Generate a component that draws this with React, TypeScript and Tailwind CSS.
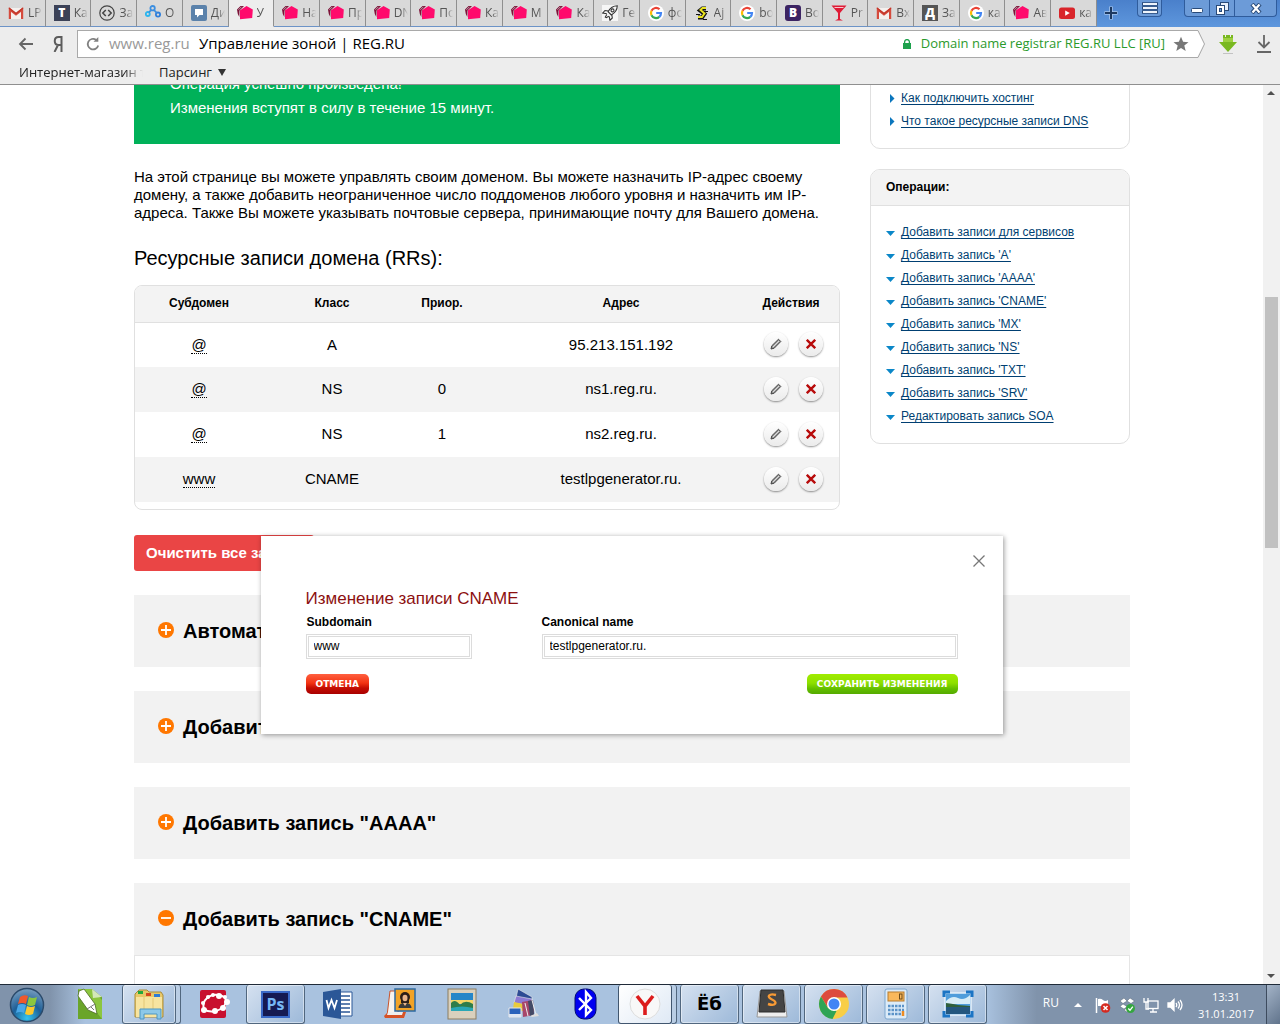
import React from "react";

const Gmail = () => (
  <svg viewBox="0 0 16 16" className="size-4 shrink-0">
    <path d="M1 3h14v11H1z" fill="#f4f0ee" />
    <path d="M1.900 14V4.600L8 9.400l6.100-4.800V14" fill="none" stroke="#d54b3d" strokeWidth="2.200" />
    <path d="M1 3l7 5.500L15 3" fill="none" stroke="#c33629" strokeWidth="1.400" />
  </svg>
);

const LetterTile = ({ letter, className = "" }: { letter: string; className?: string }) => (
  <span className={`flex size-4 shrink-0 items-center justify-center font-['Open_Sans',sans-serif] text-[12px] leading-none font-extrabold text-white ${className}`}>
    {letter}
  </span>
);

const CodeCircle = () => (
  <svg viewBox="0 0 16 16" className="size-4 shrink-0" fill="none" stroke="#444" strokeWidth="1.200">
    <circle cx="8" cy="8" r="7.200" />
    <path d="M6.800 5L3.800 8l3 3M9.200 5l3 3-3 3" strokeWidth="1.500" />
  </svg>
);

const Dots = () => (
  <svg viewBox="0 0 16 16" className="size-4 shrink-0" fill="none" strokeWidth="1.800">
    <circle cx="7.600" cy="3.200" r="2.200" stroke="#3b8ee0" />
    <circle cx="2.800" cy="9" r="2" stroke="#2cb5ee" />
    <circle cx="13" cy="9.600" r="2.100" stroke="#2f7fdb" />
    <circle cx="7.600" cy="13.600" r="1.300" stroke="#c4dff5" />
    <path d="M9 5l2.700 2.800M6 5L4 7.500" stroke="#3b8ee0" />
  </svg>
);

const Chat = () => (
  <svg viewBox="0 0 16 16" className="size-4 shrink-0">
    <rect width="16" height="16" rx="2" fill="#5b82ab" />
    <path d="M4 4h8v6H8.500l-2.500 2.500V10H4z" fill="#fff" />
  </svg>
);

const Reg = () => (
  <svg viewBox="0 0 16 16" className="size-4 shrink-0">
    <path d="M0 4.500L3.500 1H7L2.500 5.500 2.300 12 .8 9z" fill="#7d1238" />
    <path d="M1.400 4.800l3-3" stroke="#d9d9d9" strokeWidth=".7" />
    <path d="M3 5.200L9.500 1l6.300 3.500-.6 8.500L3 14.200z" fill="#ff0a6c" />
  </svg>
);

const Rocket = () => (
  <svg viewBox="0 0 16 16" className="size-4 shrink-0">
    <rect width="16" height="16" fill="#f6f6f6" />
    <g fill="none" stroke="#333" strokeWidth="1.100">
      <path d="M15.300.700c-4 0-7 2-9.300 6L9.300 10c4-2.500 6-5.300 6-9.300z" />
      <circle cx="10.500" cy="5.400" r="1.500" />
      <path d="M6.500 6L3 5.500.800 8l4 .800M9.800 9.500l.500 3.500L8 15.300l-.800-4M4.800 9.500L3.300 12l1 .700 2.500-1.500" />
    </g>
  </svg>
);

const Google = () => (
  <svg viewBox="0 0 16 16" className="size-4 shrink-0">
    <circle cx="8" cy="8" r="8" fill="#fff" />
    <g fill="none" strokeWidth="2.200">
      <path d="M11.500 4.300A5 5 0 0 0 3.500 5.800" stroke="#ea4335" />
      <path d="M3.500 5.800a5 5 0 0 0 0 4.400" stroke="#fbbc05" />
      <path d="M3.500 10.200a5 5 0 0 0 7.800 1.600" stroke="#34a853" />
      <path d="M11.300 11.800A5 5 0 0 0 13 8H8.200" stroke="#4285f4" />
    </g>
  </svg>
);

const Snake = () => (
  <svg viewBox="0 0 16 16" className="size-4 shrink-0" fill="none">
    <path d="M12 3.500H8.500L6 5.500 10.500 9 8 12.500H4" stroke="#111" strokeWidth="4" />
    <path d="M12 3H8.500L6.500 5l4 3.500L8 12H4" stroke="#e9e21f" strokeWidth="2" />
    <path d="M10 6.500h4M2 9.500h4M9 14.500h4" stroke="#111" />
  </svg>
);

const Cocktail = () => (
  <svg viewBox="0 0 16 16" className="size-4 shrink-0">
    <path d="M.500.500h15L9 8v6l3 1.500H4L7 14V8z" fill="#df1b36" />
    <path d="M3 2h10l-1 1H4z" fill="#f9c5cc" />
  </svg>
);

const YouTube = () => (
  <svg viewBox="0 0 16 16" className="size-4 shrink-0">
    <rect y="2.500" width="16" height="11.500" rx="2.500" fill="#d9252a" />
    <path d="M6.200 5.500v5.200l4.600-2.600z" fill="#fff" />
  </svg>
);

const tabs: { icon: React.ReactNode; title: string; active?: boolean }[] = [
  { icon: <Gmail />, title: "LP" },
  { icon: <LetterTile letter="T" className="bg-[#3c4257]" />, title: "Ка" },
  { icon: <CodeCircle />, title: "За" },
  { icon: <Dots />, title: "О" },
  { icon: <Chat />, title: "Ди" },
  { icon: <Reg />, title: "У", active: true },
  { icon: <Reg />, title: "На" },
  { icon: <Reg />, title: "Пр" },
  { icon: <Reg />, title: "DN" },
  { icon: <Reg />, title: "По" },
  { icon: <Reg />, title: "Ка" },
  { icon: <Reg />, title: "М" },
  { icon: <Reg />, title: "Ка" },
  { icon: <Rocket />, title: "Ге" },
  { icon: <Google />, title: "фо" },
  { icon: <Snake />, title: "Aj" },
  { icon: <Google />, title: "bo" },
  { icon: <LetterTile letter="B" className="rounded-[3px] bg-[#3c2463]" />, title: "Bo" },
  { icon: <Cocktail />, title: "Pr" },
  { icon: <Gmail />, title: "Вх" },
  { icon: <LetterTile letter="Д" className="bg-[#555]" />, title: "За" },
  { icon: <Google />, title: "ка" },
  { icon: <Reg />, title: "Ав" },
  { icon: <YouTube />, title: "ка" },
];

function TabBar() {
  return (
    <header className="flex h-[27px] shrink-0 bg-[linear-gradient(#4a80cb,#5e97dd)]">
      <div className="flex min-w-0 flex-1" role="tablist">
        {tabs.map((t, i) => (
          <button
            key={i}
            role="tab"
            aria-selected={!!t.active}
            className={`flex min-w-0 flex-1 items-center gap-1 overflow-hidden border-r border-b border-r-[#8f8f8f] pl-2 text-[12px] text-[#555] ${
              t.active ? "border-b-[#ededed] bg-[#ededed]" : "border-b-[#6c93c7] bg-[#d9d9d9]"
            }`}
          >
            {t.icon}
            <span className="w-3.5 overflow-hidden text-left whitespace-nowrap [mask-image:linear-gradient(to_right,black_50%,transparent)]">
              {t.title}
            </span>
          </button>
        ))}
      </div>
      <div className="flex w-[183px] shrink-0 items-start">
        <button aria-label="Новая вкладка" className="flex h-[25px] w-7 items-center justify-center">
          <svg viewBox="0 0 14 14" className="size-3.5">
            <path d="M7 .500v13M.500 7h13" stroke="#a9c6ec" strokeWidth="3.500" />
            <path d="M7 1v12M1 7h12" stroke="#1d3960" strokeWidth="2" />
          </svg>
        </button>
        <button aria-label="Меню" className="ml-3 flex h-[17px] w-[25px] items-center justify-center rounded-b border border-t-0 border-[#2f5c9c] bg-[#6c9bd8]">
          <svg viewBox="0 0 16 12" className="h-3 w-4">
            <path d="M0 2h16M0 6h16M0 10h16" stroke="#294a78" strokeWidth="3.500" />
            <path d="M1 2h14M1 6h14M1 10h14" stroke="#eef4fb" strokeWidth="2" />
          </svg>
        </button>
        <div className="ml-[22px] flex h-[17px] w-[93px] rounded-b border border-t-0 border-[#2f5c9c] bg-[#6c9bd8]">
          <button aria-label="Свернуть" className="flex w-[25px] items-end justify-center border-r border-[#2f5c9c] pb-[3px]">
            <svg viewBox="0 0 12 5" className="h-[5px] w-3">
              <rect x=".5" y=".5" width="11" height="4" rx="1" fill="#fff" stroke="#294a78" />
            </svg>
          </button>
          <button aria-label="Развернуть" className="flex w-[25px] items-center justify-center border-r border-[#2f5c9c]">
            <svg viewBox="0 0 13 13" className="size-[13px]">
              <rect x="4.500" y=".5" width="8" height="8" fill="#e6eefa" stroke="#294a78" />
              <rect x=".5" y="3.500" width="8" height="9" fill="#fff" stroke="#294a78" />
              <rect x="3.500" y="6.500" width="2" height="3" fill="#6c9bd8" stroke="#294a78" />
            </svg>
          </button>
          <button aria-label="Закрыть" className="flex flex-1 items-center justify-center">
            <svg viewBox="0 0 12 11" className="h-[11px] w-3">
              <path d="M2 1l8 9M10 1L2 10" stroke="#294a78" strokeWidth="4.200" />
              <path d="M2.500 1.500l7 8M9.500 1.500l-7 8" stroke="#fff" strokeWidth="2.200" />
            </svg>
          </button>
        </div>
      </div>
    </header>
  );
}

function Toolbar() {
  return (
    <div className="flex h-[33px] shrink-0 items-center bg-[#ededed] pl-[18px] text-[#666]">
      <button aria-label="Назад">
        <svg viewBox="0 0 16 14" className="h-3.5 w-4" fill="none" stroke="#666" strokeWidth="1.800">
          <path d="M15 7H2M7.500 1.500L2 7l5.500 5.500" />
        </svg>
      </button>
      <button aria-label="Яндекс" className="ml-[19px]">
        <svg viewBox="0 0 10 16" className="h-4 w-2.5" fill="none" stroke="#5c5c5c" strokeWidth="2">
          <path d="M8.500 16V1H5.500C.500 1 .500 9 5.500 9h3M5 9L1.500 16" />
        </svg>
      </button>
      <div className="ml-3.5 flex h-7 min-w-0 flex-1 items-center border border-r-0 border-[#a9a9a9] bg-white pl-2">
        <button aria-label="Обновить">
          <svg viewBox="0 0 14 14" className="size-3.5" fill="none" stroke="#808080" strokeWidth="1.800">
            <path d="M12.200 8.500A5.300 5.300 0 1 1 10 2.700" />
            <path d="M7.500 4.800h4.800V0z" fill="#808080" stroke="none" />
          </svg>
        </button>
        <span className="ml-[9px] w-[90px] text-[15px] whitespace-nowrap text-[#999]">www.reg.ru</span>
        <span className="flex-1 text-[15px] whitespace-nowrap text-black">Управление зоной | REG.RU</span>
        <svg viewBox="0 0 8 10" className="h-2.5 w-2">
          <path d="M0 4h8v6H0z" fill="#1da14c" />
          <path d="M1.600 4.500V3a2.400 2.400 0 0 1 4.800 0v1.500" fill="none" stroke="#1da14c" strokeWidth="1.300" />
        </svg>
        <span className="ml-2.5 text-[13px] whitespace-nowrap text-[#2b9a2b]">Domain name registrar REG.RU LLC [RU]</span>
        <button aria-label="В закладки" className="ml-2 w-6">
          <svg viewBox="0 0 16 16" className="size-4">
            <path d="M8 .800l2.100 5 5.400.400-4.200 3.400 1.400 5.300L8 12l-4.700 2.900 1.400-5.300L.500 6.200l5.400-.400z" fill="#777" />
          </svg>
        </button>
      </div>
      <svg viewBox="0 0 8 28" className="h-7 w-2">
        <path d="M0 .500L7 14 0 27.500z" fill="#fff" />
        <path d="M0 .500h1L7.500 14 1 27.500H0" fill="none" stroke="#a9a9a9" />
      </svg>
      <button aria-label="Savefrom" className="ml-3.5">
        <svg viewBox="0 0 18 20" className="h-5 w-[18px]">
          <path d="M4 1h2v2h1V1h4v2h1V1h2v7h4l-9 10-9-10h4z" fill="#79b820" />
          <path d="M4 4h10v4H4z" fill="#9cd040" />
          <path d="M4 19.500h10" stroke="#c3c3c3" />
        </svg>
      </button>
      <button aria-label="Загрузки" className="mr-[9px] ml-5">
        <svg viewBox="0 0 14 18" className="h-[18px] w-3.5" fill="none" stroke="#666" strokeWidth="1.800">
          <path d="M7 0v12M1.500 7L7 12.500 12.500 7M0 17h14" />
        </svg>
      </button>
    </div>
  );
}

function Bookmarks() {
  return (
    <nav className="flex h-[25px] shrink-0 items-center border-b border-[#8f8f8f] bg-[#ededed] pt-px pl-[19px] text-[13px] text-[#222]">
      <a href="#shop" className="w-[124px] overflow-hidden whitespace-nowrap [mask-image:linear-gradient(to_right,black_85%,transparent)]">
        Интернет-магазин т
      </a>
      <button className="ml-4 flex items-center gap-1.5">
        Парсинг
        <svg viewBox="0 0 8 7" className="h-[7px] w-2">
          <path d="M0 0h8L4 7z" fill="#333" />
        </svg>
      </button>
    </nav>
  );
}

const records = [
  { sub: "@", cls: "A", prio: "", addr: "95.213.151.192" },
  { sub: "@", cls: "NS", prio: "0", addr: "ns1.reg.ru." },
  { sub: "@", cls: "NS", prio: "1", addr: "ns2.reg.ru." },
  { sub: "www", cls: "CNAME", prio: "", addr: "testlpgenerator.ru." },
];

const roundBtn =
  "flex size-6 items-center justify-center rounded-full bg-[linear-gradient(#ffffff,#ebebeb)] shadow-[0_1px_2px_rgba(0,0,0,0.45)]";

function RecordsTable() {
  return (
    <div className="overflow-hidden rounded-lg border border-[#e0e0e0] pb-[7px]">
      <table className="w-full table-fixed text-center text-[15px]">
        <colgroup>
          <col className="w-[128px]" />
          <col className="w-[138px]" />
          <col className="w-[82px]" />
          <col />
          <col className="w-[80px]" />
        </colgroup>
        <thead>
          <tr className="h-9 border-b border-[#e0e0e0] bg-[#f3f3f3] text-[12px]">
            <th className="pb-0.5">Субдомен</th>
            <th className="pb-0.5">Класс</th>
            <th className="pb-0.5">Приор.</th>
            <th className="pb-0.5">Адрес</th>
            <th className="pr-4 pb-0.5">Действия</th>
          </tr>
        </thead>
        <tbody>
          {records.map((r, i) => (
            <tr key={i} className="h-[45px] even:bg-[#f3f3f3]">
              <td>
                <a href="#edit" className="border-b border-dotted border-black leading-4">{r.sub}</a>
              </td>
              <td>{r.cls}</td>
              <td>{r.prio}</td>
              <td>{r.addr}</td>
              <td>
                <div className="flex gap-[11px] pb-0.5 pl-[5px]">
                  <button aria-label="Изменить" className={roundBtn}>
                    <svg viewBox="0 0 12 12" className="size-3">
                      <path d="M1 11l.800-3.200L8.500 1.200l2.300 2.300-6.600 6.700z" fill="#999" stroke="#444" />
                      <path d="M3 9l6-6" stroke="#ddd" />
                    </svg>
                  </button>
                  <button aria-label="Удалить" className={roundBtn}>
                    <svg viewBox="0 0 10 10" className="size-2.5">
                      <path d="M.800.800l8.400 8.400M9.200.800L.800 9.200" stroke="#b80c0c" strokeWidth="2.400" />
                    </svg>
                  </button>
                </div>
              </td>
            </tr>
          ))}
        </tbody>
      </table>
    </div>
  );
}

const operations = [
  "Добавить записи для сервисов",
  "Добавить запись 'A'",
  "Добавить запись 'AAAA'",
  "Добавить запись 'CNAME'",
  "Добавить запись 'MX'",
  "Добавить запись 'NS'",
  "Добавить запись 'TXT'",
  "Добавить запись 'SRV'",
  "Редактировать запись SOA",
];

function LinkList({ items, down }: { items: string[]; down?: boolean }) {
  return (
    <ul className="text-[12px] leading-[23px] text-[#003f72]">
      {items.map((t) => (
        <li key={t} className="flex items-center">
          <span className="flex w-[15px] shrink-0">
            {down ? (
              <svg viewBox="0 0 9 5" className="mt-0.5 h-[5px] w-[9px]">
                <path d="M0 0h9L4.500 5z" fill="#0b87c8" />
              </svg>
            ) : (
              <svg viewBox="0 0 5 9" className="ml-1 h-[9px] w-[5px]">
                <path d="M0 0v9l4.500-4.500z" fill="#0b76bd" />
              </svg>
            )}
          </span>
          <a href="#op" className="whitespace-nowrap underline underline-offset-2">{t}</a>
        </li>
      ))}
    </ul>
  );
}

function Sidebar() {
  return (
    <aside className="w-[260px] shrink-0">
      <div className="rounded-b-[10px] border border-[#e0e0e0] pt-[41px] pr-4 pb-[15px] pl-[15px]">
        <LinkList items={["Как подключить хостинг", "Что такое ресурсные записи DNS"]} />
      </div>
      <section className="mt-5 overflow-hidden rounded-[10px] border border-[#e0e0e0]">
        <h2 className="h-9 border-b border-[#e0e0e0] bg-[#f3f3f3] pl-[15px] text-[12px] leading-[34px] font-bold">Операции:</h2>
        <div className="px-[15px] pt-[15px] pb-[15px]">
          <LinkList items={operations} down />
        </div>
      </section>
    </aside>
  );
}

function Accordion({ title, open }: { title: string; open?: boolean }) {
  return (
    <h2>
      <button aria-expanded={!!open} className="flex h-[72px] w-full items-center gap-[9px] bg-[#f2f2f2] pl-6 text-left text-[20px] font-bold">
        <svg viewBox="0 0 16 16" className="mb-0.5 size-4">
          <circle cx="8" cy="8" r="8" fill="#ff7700" />
          <path d={open ? "M3 8h10" : "M3 8h10M8 3v10"} stroke="#fff" strokeWidth="1.800" />
        </svg>
        {title}
      </button>
    </h2>
  );
}

const field = "h-[25px] w-full border-[3px] border-double border-[#dcdcdc] bg-white px-[5px] text-[12px] outline-none";
const actionBtn = "h-5 rounded-[5px] px-2.5 font-['DejaVu_Sans',sans-serif] text-[9px] leading-5 font-bold text-white";

function EditDialog() {
  return (
    <div className="absolute inset-x-0 top-[451px] flex justify-center">
      <form
        role="dialog"
        aria-labelledby="dlg-title"
        onSubmit={(e) => e.preventDefault()}
        className="relative h-[198px] w-[742px] bg-white px-[45px] pt-[53px] shadow-[1px_1px_5px_rgba(0,0,0,0.4)]"
      >
        <button type="button" aria-label="Закрыть" className="absolute top-[19px] right-[18px]">
          <svg viewBox="0 0 12 12" className="size-3">
            <path d="M.500.500l11 11M11.500.500l-11 11" stroke="#777" strokeWidth="1.300" />
          </svg>
        </button>
        <h2 id="dlg-title" className="text-[17px] leading-5 text-[#8c1010]">Изменение записи CNAME</h2>
        <div className="mt-[3px] flex gap-[70px]">
          <div className="w-[166px]">
            <label htmlFor="subdomain" className="block h-[21px] pl-px text-[12px] leading-5 font-bold">Subdomain</label>
            <input id="subdomain" defaultValue="www" className={field} />
          </div>
          <div className="flex-1">
            <label htmlFor="canonical" className="block h-[21px] text-[12px] leading-5 font-bold">Canonical name</label>
            <input id="canonical" defaultValue="testlpgenerator.ru." className={field} />
          </div>
        </div>
        <div className="mt-[15px] flex justify-between">
          <button type="button" className={`${actionBtn} bg-[linear-gradient(#ff6040,#f33312_45%,#c40d02_70%,#a80000)]`}>ОТМЕНА</button>
          <button type="submit" className={`${actionBtn} bg-[linear-gradient(#a0ec00,#8ee000_45%,#62bd00_75%,#55aa00)]`}>СОХРАНИТЬ ИЗМЕНЕНИЯ</button>
        </div>
      </form>
    </div>
  );
}

function ScrollBar() {
  return (
    <div className="flex w-[17px] shrink-0 flex-col items-center justify-between bg-[#f1f1f1] py-1.5">
      <svg viewBox="0 0 8 4" className="mr-0.5 h-1 w-2"><path d="M0 4h8L4 0z" fill="#505050" /></svg>
      <div className="mb-[225px] h-[251px] w-[13px] bg-[#c1c1c1]" />
      <svg viewBox="0 0 8 4" className="mr-0.5 h-1 w-2"><path d="M0 0h8L4 4z" fill="#505050" /></svg>
    </div>
  );
}

function Page() {
  return (
    <div className="flex min-h-0 flex-1 overflow-hidden bg-white font-['Liberation_Sans',sans-serif] text-black">
      <main className="relative min-w-0 flex-1 pl-px">
        <div className="mx-auto w-full max-w-[996px]">
          <div className="-mt-10 flex gap-[30px]">
            <div className="min-w-0 flex-1">
              <div className="bg-[#00b159] px-9 pt-[27px] pb-6 text-[15px] leading-6 text-white">
                <p>Операция успешно произведена!</p>
                <p>Изменения вступят в силу в течение 15 минут.</p>
              </div>
              <p className="mt-6 text-[15px] leading-[18px]">
                На этой странице вы можете управлять своим доменом. Вы можете назначить IP-адрес своему домену, а также
                добавить неограниченное число поддоменов любого уровня и назначить им IP-адреса. Также Вы можете
                указывать почтовые сервера, принимающие почту для Вашего домена.
              </p>
              <h1 className="mt-6 mb-[15px] text-[20px] leading-6">Ресурсные записи домена (RRs):</h1>
              <RecordsTable />
            </div>
            <Sidebar />
          </div>
          <button className="mt-[25px] h-9 rounded-[3px] bg-[#ea4545] px-3 text-[15px] font-bold text-white">Очистить все записи</button>
          <div className="mt-6 flex flex-col gap-6">
            <Accordion title="Автоматическая настройка" />
            <Accordion title={'Добавить запись "A"'} />
            <Accordion title={'Добавить запись "AAAA"'} />
            <section>
              <Accordion title={'Добавить запись "CNAME"'} open />
              <div className="grid grid-cols-[296px_1fr] border border-[#e5e5e5] px-[52px] pt-[25px] pb-6 text-[12px] leading-4 font-bold">
                <span>Subdomain</span>
                <span>Canonical name</span>
              </div>
            </section>
          </div>
        </div>
        <EditDialog />
      </main>
      <ScrollBar />
    </div>
  );
}

const big = "size-8";

const Corel = () => (
  <svg viewBox="0 0 32 32" className={big}>
    <path d="M4 1h14l10 8v22H4z" fill="#6aa52a" />
    <path d="M4 1h14L28 12v19z" fill="#8cc63f" />
    <path d="M18 1l10 8-9 1z" fill="#d4e8b8" />
    <path d="M5 3l5-2 11 15 2 10-9-4L4 8z" fill="#fff" stroke="#4a6b22" strokeWidth=".8" />
    <path d="M13 21l8-5M17 19l3 3" fill="none" stroke="#777" />
  </svg>
);
const Explorer = () => (
  <svg viewBox="0 0 32 32" className={big}>
    <path d="M2 6l4-4h8l2 2h12l2 3v22H2z" fill="#e9c868" stroke="#a98c3b" />
    <path d="M5 3h5v3H5z" fill="#22a83d" />
    <path d="M13 5h5v3h-5z" fill="#d7451f" />
    <path d="M21 6h6v3h-6z" fill="#2e7cd6" />
    <path d="M3 9h26v20H3z" fill="#f7e4a0" />
    <path d="M11 9v18M20 10v16" stroke="#e2c776" />
    <path d="M7 31V21h21v10h-4v-5H11v5z" fill="#8cc8e8" stroke="#4c97c3" />
  </svg>
);
const RedFlower = () => (
  <svg viewBox="0 0 32 32" className={big}>
    <rect x="2" y="2" width="26" height="28" rx="2" fill="#c8102e" />
    <path d="M6 21C3 12 12 6 20 7s10 6 6 11-14 8-20 3z" fill="none" stroke="#fff" strokeWidth="2" />
    {[[10, 9, 2], [15, 7, 2], [21, 8, 3], [27, 9, 2], [29, 14, 3], [25, 20, 3], [17, 23, 3], [6, 22, 3], [5, 15, 2]].map(([x, y, r]) => (
      <circle key={`${x}-${y}`} cx={x} cy={y} r={r} fill="#fff" />
    ))}
  </svg>
);
const Photoshop = () => (
  <span className="flex h-[27px] w-[29px] items-center justify-center border-2 border-[#3a69c8] bg-[#161a52] font-['Open_Sans',sans-serif] text-[16px] leading-none font-bold text-[#77b7f5]">Ps</span>
);
const Word = () => (
  <svg viewBox="0 0 32 32" className={big}>
    <path d="M16 4h14v24H16z" fill="#fff" stroke="#2b5797" />
    <path d="M19 8h9M19 12h9M19 16h9M19 20h9M19 24h9" stroke="#2b5797" strokeWidth="1.500" />
    <path d="M1 4l18-3v30L1 28z" fill="#2b5797" />
    <path d="M4.500 12l2 8 3-8 3 8 2.500-8" fill="none" stroke="#fff" strokeWidth="1.800" />
  </svg>
);
const Contacts = () => (
  <svg viewBox="0 0 32 32" className={big}>
    <path d="M6 3h8v25H3z" fill="#f7f3ee" stroke="#c9532b" />
    <path d="M0 28l4-4h18l-2 6H1z" fill="#d65226" />
    <path d="M4 24h15l-1 3H3z" fill="#eee" />
    <path d="M11 1h20v22H11z" fill="#f2a326" stroke="#2b69a3" strokeWidth="1.500" />
    <circle cx="21" cy="9" r="5" fill="#2c1e18" />
    <path d="M17 9v6h8V9z" fill="#2c1e18" />
    <ellipse cx="21" cy="10" rx="2.500" ry="3.300" fill="#e8b48b" />
    <path d="M14.500 20c0-7 13-7 13 0z" fill="#3a3a3a" />
    <path d="M19 15l2 3 2-3z" fill="#e8b48b" />
  </svg>
);
const Photo = () => (
  <svg viewBox="0 0 32 32" className={big}>
    <rect x="2" y="1" width="28" height="30" fill="#d9d0bd" stroke="#8c7d60" />
    <rect x="5" y="5" width="22" height="18" fill="#2586c8" />
    <path d="M5 12h22v4H5z" fill="#f5d667" />
    <path d="M5 15q4-5 9 2 5-6 13-1v7H5z" fill="#2f7d49" />
    <path d="M5 20q11-3 22 0v3H5z" fill="#2aa7b5" />
  </svg>
);
const Montage = () => (
  <svg viewBox="0 0 32 32" className={big}>
    <path d="M10 1l14 8v8L8 10z" fill="#2d4b94" stroke="#e9e9e9" strokeWidth=".600" />
    <path d="M8 8l16 3v7L6 15z" fill="#8d7ad4" stroke="#e9e9e9" strokeWidth=".600" />
    <path d="M6 14l14 3v7L5 21z" fill="#e8cb3c" />
    <path d="M14 14l11-2 1 15-11 2z" fill="#a8476b" />
    <path d="M20 13l5-1 1 15-4 1z" fill="#434a66" />
    <path d="M17 15l3 13M24 12l4 15" stroke="#eee" />
    <path d="M1 20h12v9H1z" fill="#2b63bb" stroke="#e7e7e7" />
    <path d="M1 26h12v3H1z" fill="#dfe7f2" />
    <path d="M22 28l7-3 2 3-7 1z" fill="#ddd" />
  </svg>
);
const Bluetooth = () => (
  <svg viewBox="0 0 32 32" className={big}>
    <rect x="5" y="1" width="21" height="30" rx="9" fill="#0000f0" stroke="#000a70" />
    <path d="M9 10l12 12-5 5V4l5 6L9 22" fill="none" stroke="#fff" strokeWidth="2.400" />
  </svg>
);
const Yandex = () => (
  <svg viewBox="0 0 32 32" className={big}>
    <circle cx="16" cy="16" r="15" fill="#f8f8f8" stroke="#ddd" />
    <path d="M8 8l8 10 8-10M16 17v10" fill="none" stroke="#dc1c1c" strokeWidth="3.600" />
  </svg>
);
const Sublime = () => (
  <svg viewBox="0 0 32 32" className={big}>
    <path d="M4 3h24l3 26H1z" fill="#eee" stroke="#999" />
    <path d="M5 2h22l2 22H3z" fill="#454545" stroke="#2c2c2c" />
    <path d="M20 7c-7-2-10 2-4 4.500s4 7-4 4.500" fill="none" stroke="#f79a35" strokeWidth="2.400" />
  </svg>
);
const Chrome = () => (
  <svg viewBox="0 0 32 32" className={big}>
    <circle cx="16" cy="16" r="15" fill="#f8ce46" />
    <path d="M3 8.500A15 15 0 0 1 29.500 9.500H16L9.500 19z" fill="#dd4b3e" />
    <path d="M3 8.500L10 20l8.500 3-4 8A15 15 0 0 1 3 8.500z" fill="#2fa455" />
    <circle cx="16" cy="16" r="7" fill="#fff" />
    <circle cx="16" cy="16" r="5.500" fill="#4285f4" />
  </svg>
);
const Calc = () => (
  <svg viewBox="0 0 32 32" className={big}>
    <rect x="5" y="1" width="22" height="30" rx="2" fill="#dcebf8" stroke="#7da7cf" />
    <rect x="8" y="4" width="16" height="9" fill="#f9b85c" stroke="#b77c2e" />
    <path d="M8 18h16M8 22h16M8 26h16" stroke="#5b93c8" strokeWidth="2.500" strokeDasharray="2.500 1" />
    <path d="M23 23v5" stroke="#ed8b22" strokeWidth="2.500" />
    <rect x="19.500" y="6" width="2.500" height="5" fill="none" stroke="#6b4a1a" />
  </svg>
);
const Viewer = () => (
  <svg viewBox="0 0 32 32" className={big}>
    <rect x="3" y="5" width="26" height="22" fill="#4f9ddb" stroke="#e6f1fa" strokeWidth="1.500" />
    <path d="M4 13q6-6 12-3t12-3v9H4z" fill="#d6ecf7" />
    <path d="M4 15q8 1 12 2l12 1v2H4z" fill="#2f5f3c" />
    <path d="M4 19h24v7H4z" fill="#24577f" />
    <path d="M2 9V4h6M24 4h6v5M30 23v5h-6M8 28H2v-5" fill="none" stroke="#1b74c4" strokeWidth="3" />
  </svg>
);

const apps: { name: string; icon: React.ReactNode; open?: boolean; stacked?: boolean; current?: boolean }[] = [
  { name: "CorelDRAW", icon: <Corel /> },
  { name: "Проводник", icon: <Explorer />, open: true, stacked: true },
  { name: "IrfanView", icon: <RedFlower /> },
  { name: "Photoshop", icon: <Photoshop />, open: true },
  { name: "Word", icon: <Word /> },
  { name: "Контакты", icon: <Contacts /> },
  { name: "Фото", icon: <Photo /> },
  { name: "Коллаж", icon: <Montage /> },
  { name: "Bluetooth", icon: <Bluetooth /> },
  { name: "Яндекс", icon: <Yandex />, open: true, stacked: true, current: true },
  {
    name: "Ёб",
    icon: <span className="font-['DejaVu_Sans',sans-serif] text-[18px] leading-none font-bold text-black">Ёб</span>,
    open: true,
  },
  { name: "Sublime", icon: <Sublime />, open: true },
  { name: "Chrome", icon: <Chrome />, open: true },
  { name: "Калькулятор", icon: <Calc />, open: true },
  { name: "Просмотр", icon: <Viewer />, open: true },
];

function appClass(a: { open?: boolean; current?: boolean }) {
  if (a.current) return "border-[#41566f] bg-[linear-gradient(135deg,#ffffff,#dfe9f5)]";
  if (a.open) return "border-[#51677f] bg-[linear-gradient(135deg,#d5e1f0,#9db9d9)] shadow-[inset_0_0_0_1px_rgba(255,255,255,0.45)]";
  return "border-transparent";
}

function Taskbar() {
  return (
    <footer className="flex h-10 shrink-0 items-stretch border-t border-[#1f2a38] bg-[linear-gradient(to_right,#8093ab_0px,#8093ab_50px,#a9c2df_85px,#a9c2df_77%,#8093ab_81%)]">
      <button aria-label="Пуск" className="flex w-[60px] shrink-0 items-center pl-[9px]">
        <svg viewBox="0 0 36 36" className="size-9">
          <defs>
            <radialGradient id="orb" cx=".5" cy=".9" r=".9">
              <stop offset="0" stopColor="#35c4ef" />
              <stop offset=".5" stopColor="#1d5f98" />
              <stop offset="1" stopColor="#7c9fc0" />
            </radialGradient>
          </defs>
          <circle cx="18" cy="18" r="16.500" fill="url(#orb)" stroke="#2b4a6b" strokeWidth="1.500" />
          <path d="M11 10q4-3 8-1l-2 8q-4-2-8 0z" fill="#f0582b" />
          <path d="M20 10q4 2 8 0l-2 8q-4 2-8 0z" fill="#8cc63f" />
          <path d="M9 18q4-2 8 0l-2 8q-4-2-8 0z" fill="#4aa7e8" />
          <path d="M18 19q4 2 8 0l-2 8q-4 2-8 0z" fill="#fcc82d" />
        </svg>
      </button>
      <div className="flex min-w-0 flex-1 gap-[3px]">
        {apps.map((a) => (
          <div key={a.name} className="flex w-[59px] shrink-0">
            <button
              aria-label={a.name}
              className={`flex min-w-0 flex-1 items-center justify-center rounded-[3px] border border-t-0 ${appClass(a)}`}
            >
              {a.icon}
            </button>
            {a.stacked && <span className="w-[5px] rounded-r-[3px] border-r border-b border-[#51677f] bg-[#b9cde4]" />}
          </div>
        ))}
      </div>
      <div className="flex shrink-0 items-center font-['Open_Sans',sans-serif] text-[12px] text-white">
        <span className="mr-[15px] mb-1">RU</span>
        <svg viewBox="0 0 8 4" className="mr-[13px] h-1 w-2"><path d="M0 4h8L4 0z" fill="#fff" /></svg>
        <svg viewBox="0 0 16 16" className="mr-2 size-4">
          <path d="M1.500 1v15" stroke="#fff" strokeWidth="1.500" />
          <path d="M3 2q3-1 5 1t5 0v6H3z" fill="#fff" />
          <circle cx="10.500" cy="11" r="4.800" fill="#d42a20" />
          <path d="M8.500 9l4 4M12.500 9l-4 4" stroke="#fff" strokeWidth="1.500" />
        </svg>
        <svg viewBox="0 0 16 16" className="mr-2 size-4">
          <path d="M5 1L1 4l3 2.500L8 4zM11 1L8 4l4 2.500L15.500 4zM4 7L1 9.500 5 12l3-2.500zM12 7L8 9.500l3 2 4-2zM5 13l3-2 3 2-3 2z" fill="#fff" stroke="#40505f" strokeWidth=".4" />
          <circle cx="11.500" cy="11.500" r="4.500" fill="#34a63f" />
          <path d="M9.300 11.500l1.700 1.800 2.800-3.600" fill="none" stroke="#fff" strokeWidth="1.300" />
        </svg>
        <svg viewBox="0 0 16 16" className="mr-2 size-4" fill="none" stroke="#fff" strokeWidth="1.300">
          <rect x="5" y="4" width="10" height="7.500" />
          <path d="M7 15h7M10 12v3M1 1v4h4V1M3 5v7h3" />
        </svg>
        <svg viewBox="0 0 16 16" className="mr-[15px] size-4" fill="none" stroke="#fff" strokeWidth="1.300">
          <path d="M1 6h2.500L7 2.500v11L3.500 10H1z" fill="#fff" />
          <path d="M9 6q1.500 2 0 4M11 4.500q3 3.500 0 7M13 3q4 5 0 10" />
        </svg>
        <div className="mr-3 text-center text-[11px] leading-[17px]">
          <div>13:31</div>
          <div>31.01.2017</div>
        </div>
        <button aria-label="Показать рабочий стол" className="h-full w-3.5 border-l border-[#3d4b5e] bg-[linear-gradient(135deg,#a3b3c7,#61748c)]" />
      </div>
    </footer>
  );
}

export default function App() {
  return (
    <div className="flex h-screen flex-col overflow-hidden bg-white">
      <div className="shrink-0 font-['Open_Sans',sans-serif]">
        <TabBar />
        <Toolbar />
        <Bookmarks />
      </div>
      <Page />
      <Taskbar />
    </div>
  );
}
